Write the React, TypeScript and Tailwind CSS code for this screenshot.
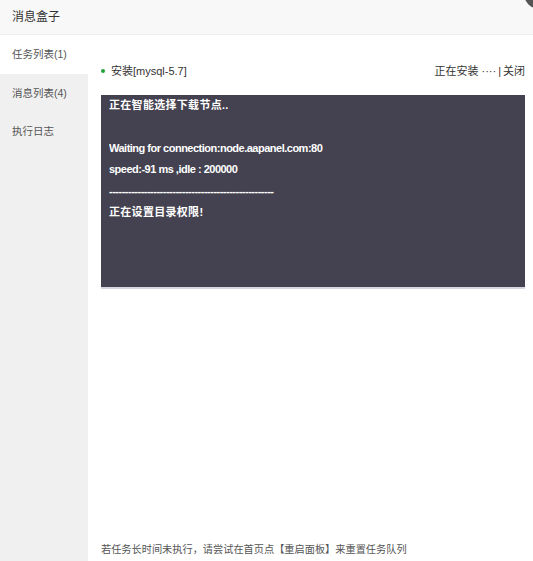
import React from "react";

const tasks = [
  { label: "任务列表(1)", active: true },
  { label: "消息列表(4)", active: false },
  { label: "执行日志", active: false },
];

const logLines = [
  { text: "正在智能选择下载节点..", latin: false },
  { text: "", latin: false },
  { text: "Waiting for connection:node.aapanel.com:80", latin: true },
  { text: "speed:-91 ms ,idle : 200000", latin: true },
  { text: "----------------------------------------------------", latin: true },
  { text: "正在设置目录权限!", latin: false },
];

export default function App() {
  return (
    <div
      className="relative flex h-[561px] w-[533px] flex-col overflow-hidden bg-white text-[#333]"
      style={{ fontFamily: '"Liberation Sans", Arial, "Noto Sans CJK SC", sans-serif' }}
    >
      <div className="flex h-[35px] shrink-0 items-center border-b border-[#eee] bg-[#f8f8f8] px-3 text-[12px]">
        消息盒子
      </div>
      {/* close button peeking in from the corner */}
      <div className="absolute -right-[22px] -top-[22px] h-[31px] w-[31px] rounded-full bg-[#555]" />

      <div className="flex min-h-0 flex-1">
        <div className="w-[88px] shrink-0 bg-[#f0f0f0]">
          {tasks.map((t) => (
            <div
              key={t.label}
              className={`flex h-[38.5px] items-center px-3 pt-[2px] text-[10.5px] text-[#555] ${t.active ? "bg-white" : ""}`}
            >
              {t.label}
            </div>
          ))}
        </div>

        <div className="flex min-w-0 flex-1 flex-col pl-[13px] pr-2">
          <div className="flex h-[60px] shrink-0 items-end justify-between pb-[16px] text-[11px] text-[#333]">
            <div className="flex items-center gap-[6px]">
              <span className="h-[4px] w-[4px] rounded-full bg-[#20a53a]" />
              <span>安装[mysql-5.7]</span>
            </div>
            <div>
              正在安装<span className="ml-[3px]">····</span>
              <span className="mx-[2px]">|</span>关闭
            </div>
          </div>
          <div className="h-[194px] shrink-0 border-b-2 border-[#d7d7e0] bg-[#444250] px-2 text-[11px] font-bold leading-[21.4px] text-white">
            {logLines.map((l, i) => (
              <div
                key={i}
                className={`h-[21.4px] overflow-hidden whitespace-nowrap ${l.latin ? "tracking-[-0.5px]" : "tracking-[0.3px]"}`}
              >
                {l.text}
              </div>
            ))}
          </div>
          <div className="mt-auto pb-[4px] text-[10.2px] text-[#555]">
            若任务长时间未执行，请尝试在首页点【重启面板】来重置任务队列
          </div>
        </div>
      </div>
    </div>
  );
}
